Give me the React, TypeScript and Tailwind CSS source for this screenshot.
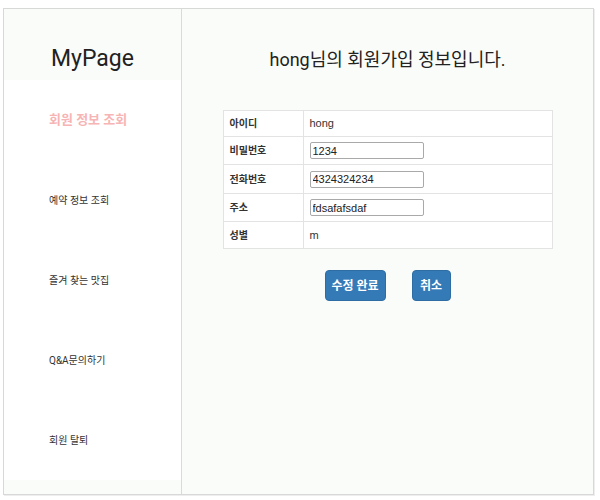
const font = {
  fontFamily: 'Roboto, "Noto Sans CJK KR", sans-serif',
}

const cell = {
  fontFamily: '"Liberation Sans", "Noto Sans CJK KR", sans-serif',
}

const menu = ["예약 정보 조회", "즐겨 찾는 맛집", "Q&A문의하기", "회원 탈퇴"]

function Row({ label, children, h }: { label: string; children: React.ReactNode; h: string }) {
  return (
    <div className={`flex border-t border-[#e3e3e3] ${h}`} style={cell}>
      <div className="w-[80px] shrink-0 border-r border-[#e3e3e3] flex items-center pl-[6px] text-[10px] font-bold text-[#333]">
        {label}
      </div>
      <div className="flex-1 flex items-center pl-[6px] text-[11px] text-[#333]">{children}</div>
    </div>
  )
}

function Field({ value }: { value: string }) {
  return (
    <input
      defaultValue={value}
      className="w-[114px] h-[17px] border border-[#a9a9a9] rounded-[2px] px-[2px] text-[11px] text-[#222] bg-white outline-none"
      style={cell}
    />
  )
}

export default function App() {
  return (
    <div className="w-[600px] h-[500px] bg-white pt-[8px] pl-[3px]" style={font}>
      <div className="w-[591px] h-[487px] border border-[#d8d8d8] flex shadow-[1px_1px_0_#eeeeee]">
        <aside className="w-[178px] shrink-0 border-r border-[#dadada] flex flex-col bg-white">
          <div className="h-[71px] bg-[#fafcf9] flex justify-center text-[23px] leading-[28px] text-[#222] pt-[36px]">
            MyPage
          </div>
          <div className="h-[80px] flex items-center pl-[45px] text-[13px] font-bold text-[#f7b4b4]">
            회원 정보 조회
          </div>
          {menu.map((m) => (
            <div key={m} className="h-[80px] flex items-center pl-[45px] text-[10px] text-[#333]">
              {m}
            </div>
          ))}
          <div className="flex-1 bg-[#fafcf9]" />
        </aside>

        <main className="flex-1 bg-[#fafcf9] flex flex-col items-center">
          <h1 className="mt-[37px] text-[18px] leading-[28px] text-[#222]">
            hong님의 회원가입 정보입니다.
          </h1>
          <div className="mt-[36px] w-[330px] bg-white border-x border-b border-[#e3e3e3]">
            <Row label="아이디" h="h-[26px]">hong</Row>
            <Row label="비밀번호" h="h-[28px]">
              <Field value="1234" />
            </Row>
            <Row label="전화번호" h="h-[29px]">
              <Field value="4324324234" />
            </Row>
            <Row label="주소" h="h-[28px]">
              <Field value="fdsafafsdaf" />
            </Row>
            <Row label="성별" h="h-[27px]">m</Row>
          </div>
          <div className="mt-[21px] flex gap-[26px]">
            <button className="w-[61px] h-[31px] rounded-[4px] bg-[#337ab7] border border-[#2e6da4] text-white text-[12px] font-bold">
              수정 완료
            </button>
            <button className="w-[39px] h-[31px] rounded-[4px] bg-[#337ab7] border border-[#2e6da4] text-white text-[12px] font-bold">
              취소
            </button>
          </div>
        </main>
      </div>
    </div>
  )
}
